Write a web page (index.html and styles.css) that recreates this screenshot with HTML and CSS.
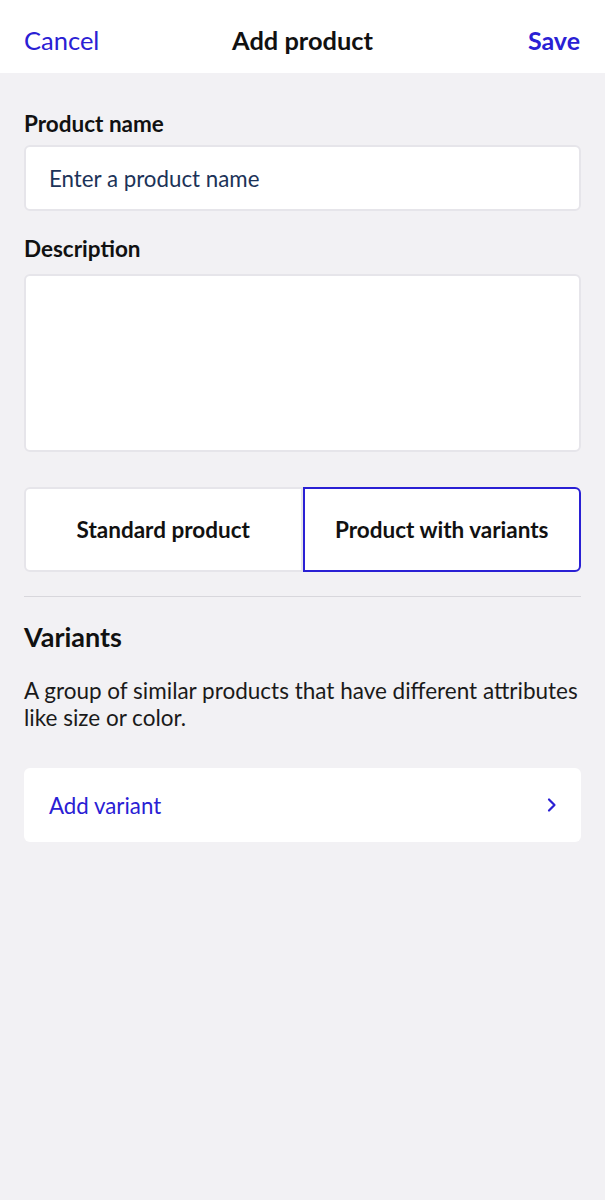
FILE: index.html
```html
<!DOCTYPE html>
<html>
<head>
<meta charset="utf-8">
<link rel="stylesheet" href="styles.css">
</head>
<body>
<header class="topbar">
  <span class="link">Cancel</span>
  <span class="title">Add product</span>
  <span class="link save">Save</span>
</header>
<main class="content">
  <label class="label">Product name</label>
  <div class="input"><span class="placeholder">Enter a product name</span></div>
  <label class="label label-desc">Description</label>
  <div class="textarea"></div>
  <div class="segmented">
    <div class="seg">Standard product</div>
    <div class="seg seg-active">Product with variants</div>
  </div>
  <hr class="divider">
  <h2 class="heading">Variants</h2>
  <p class="para">A group of similar products that have different attributes like size or color.</p>
  <div class="row">
    <span class="row-text">Add variant</span>
    <svg class="chev" width="12" height="16" viewBox="0 0 12 16"><path d="M3 2.5 L8.5 8 L3 13.5" fill="none" stroke="#2a20d4" stroke-width="2.2" stroke-linecap="round" stroke-linejoin="round"/></svg>
  </div>
</main>
</body>
</html>
```
FILE: styles.css
```css
* { box-sizing: border-box; }
html, body { margin: 0; padding: 0; }
body {
  background: #f2f1f4;
  font-family: Lato, "Open Sans", sans-serif;
  color: #111;
  width: 605px;
  min-height: 1200px;
}
.topbar {
  background: #fff;
  height: 73px;
  display: flex;
  align-items: center;
  justify-content: space-between;
  padding: 7px 25px 0 24px;
  position: relative;
}
.link {
  color: #2a20d4;
  font-size: 25.5px;
  line-height: 30px;
}
.save { font-weight: 700; font-size: 25px; }
.title {
  position: absolute;
  left: 0; right: 0;
  top: 7px; bottom: 0;
  display: flex;
  align-items: center;
  justify-content: center;
  font-size: 25.4px;
  font-weight: 700;
  color: #111;
  pointer-events: none;
}
.content {
  padding: 0 24px;
  display: flex;
  flex-direction: column;
}
.label {
  font-size: 22.5px;
  font-weight: 700;
  line-height: 24px;
  margin-top: 39px;
  color: #111;
}
.input {
  margin-top: 9px;
  height: 66px;
  background: #fff;
  border: 2px solid #e6e5ea;
  border-radius: 6px;
  display: flex;
  align-items: center;
  padding: 0 23px;
}
.placeholder {
  font-size: 22.3px;
  color: #1c3358;
}
.label-desc { margin-top: 26px; }
.textarea {
  margin-top: 13px;
  height: 178px;
  background: #fff;
  border: 2px solid #e6e5ea;
  border-radius: 6px;
}
.segmented {
  margin-top: 35px;
  display: grid;
  grid-template-columns: 1fr 1fr;
  height: 85px;
}
.seg {
  background: #fff;
  border: 2px solid #e6e5ea;
  border-radius: 6px 0 0 6px;
  display: flex;
  align-items: center;
  justify-content: center;
  font-size: 22.5px;
  font-weight: 700;
  color: #111;
}
.seg-active {
  border: 2px solid #2a20d4;
  border-radius: 0 6px 6px 0;
}
.divider {
  margin: 24px 0 0;
  border: none;
  height: 1px;
  background: #d8d7dc;
}
.heading {
  margin: 25px 0 0;
  font-size: 27px;
  font-weight: 700;
  line-height: 30px;
  color: #111;
}
.para {
  margin: 25px 0 0;
  font-size: 22.5px;
  line-height: 27px;
  color: #1a1a1a;
}
.row {
  margin-top: 37px;
  height: 74px;
  background: #fff;
  border-radius: 6px;
  display: flex;
  align-items: center;
  justify-content: space-between;
  padding: 0 23px 0 25px;
}
.row-text {
  font-size: 22.3px;
  color: #2a20d4;
}
.chev { display: block; }
```
